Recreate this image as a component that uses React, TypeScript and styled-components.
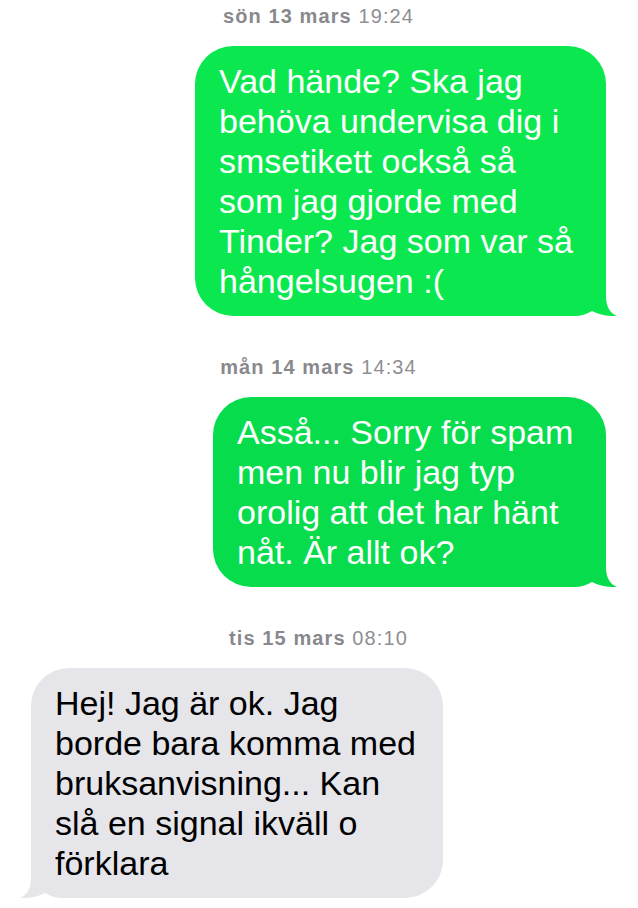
import React from "react";
import styled, { createGlobalStyle } from "styled-components";

const GlobalStyle = createGlobalStyle`
  * { box-sizing: border-box; }
  body {
    margin: 0;
    background: #ffffff;
    font-family: "Liberation Sans", Arial, sans-serif;
  }
`;

type Msg = {
  stamp: string;
  time: string;
  fromMe: boolean;
  width: number;
  color: string;
  lines: string[];
};

const messages: Msg[] = [
  {
    stamp: "sön 13 mars",
    time: "19:24",
    fromMe: true,
    width: 411,
    color: "#0be84f",
    lines: [
      "Vad hände? Ska jag",
      "behöva undervisa dig i",
      "smsetikett också så",
      "som jag gjorde med",
      "Tinder? Jag som var så",
      "hångelsugen :(",
    ],
  },
  {
    stamp: "mån 14 mars",
    time: "14:34",
    fromMe: true,
    width: 393,
    color: "#07dc4c",
    lines: [
      "Asså... Sorry för spam",
      "men nu blir jag typ",
      "orolig att det har hänt",
      "nåt. Är allt ok?",
    ],
  },
  {
    stamp: "tis 15 mars",
    time: "08:10",
    fromMe: false,
    width: 412,
    color: "#e5e5ea",
    lines: [
      "Hej! Jag är ok. Jag",
      "borde bara komma med",
      "bruksanvisning... Kan",
      "slå en signal ikväll o",
      "förklara",
    ],
  },
];

function Tail({ color, left }: { color: string; left: boolean }) {
  return (
    <TailSvg $left={left} width="52" height="40" viewBox="0 0 52 40">
      <path
        d="M0 0 L40 0 L40 20 C40 31 44 37 51 40 C44 40.5 33 39 26 35 C21 38 15 40 8 40 L0 40 Z"
        fill={color}
      />
    </TailSvg>
  );
}

export default function App() {
  return (
    <>
      <GlobalStyle />
      <Thread>
        {messages.map((m, i) => (
          <Group key={i} $first={i === 0}>
            <Stamp>
              <b>{m.stamp}</b> {m.time}
            </Stamp>
            <Row $fromMe={m.fromMe}>
              <Bubble $fromMe={m.fromMe} $color={m.color} $w={m.width}>
                {m.lines.map((l, j) => (
                  <Line key={j}>{l}</Line>
                ))}
                <Tail color={m.color} left={!m.fromMe} />
              </Bubble>
            </Row>
          </Group>
        ))}
      </Thread>
    </>
  );
}

const Thread = styled.div`
  width: 638px;
  height: 908px;
  overflow: hidden;
  padding: 4px 32px 0 31px;
  display: flex;
  flex-direction: column;
`;

const Group = styled.div<{ $first: boolean }>`
  display: flex;
  flex-direction: column;
  gap: 18px;
  margin-top: ${(p) => (p.$first ? "0" : "39px")};
`;

const Stamp = styled.div`
  text-align: center;
  font-size: 20px;
  line-height: 24px;
  height: 24px;
  letter-spacing: 1.1px;
  color: #8e8e93;

  b {
    font-weight: 700;
    color: #88888d;
  }
`;

const Row = styled.div<{ $fromMe: boolean }>`
  display: flex;
  justify-content: ${(p) => (p.$fromMe ? "flex-end" : "flex-start")};
`;

const Bubble = styled.div<{ $fromMe: boolean; $color: string; $w: number }>`
  position: relative;
  width: ${(p) => p.$w}px;
  padding: 15px 0 15px 24px;
  border-radius: 38px;
  background: ${(p) => p.$color};
  color: ${(p) => (p.$fromMe ? "#ffffff" : "#000000")};
  font-size: 34px;
  line-height: 40px;
`;

const Line = styled.div`
  white-space: nowrap;
  position: relative;
  z-index: 1;
`;

const TailSvg = styled.svg<{ $left: boolean }>`
  position: absolute;
  bottom: 0;
  ${(p) => (p.$left ? "left: -12px; transform: scaleX(-1);" : "right: -12px;")}
  display: block;
`;
